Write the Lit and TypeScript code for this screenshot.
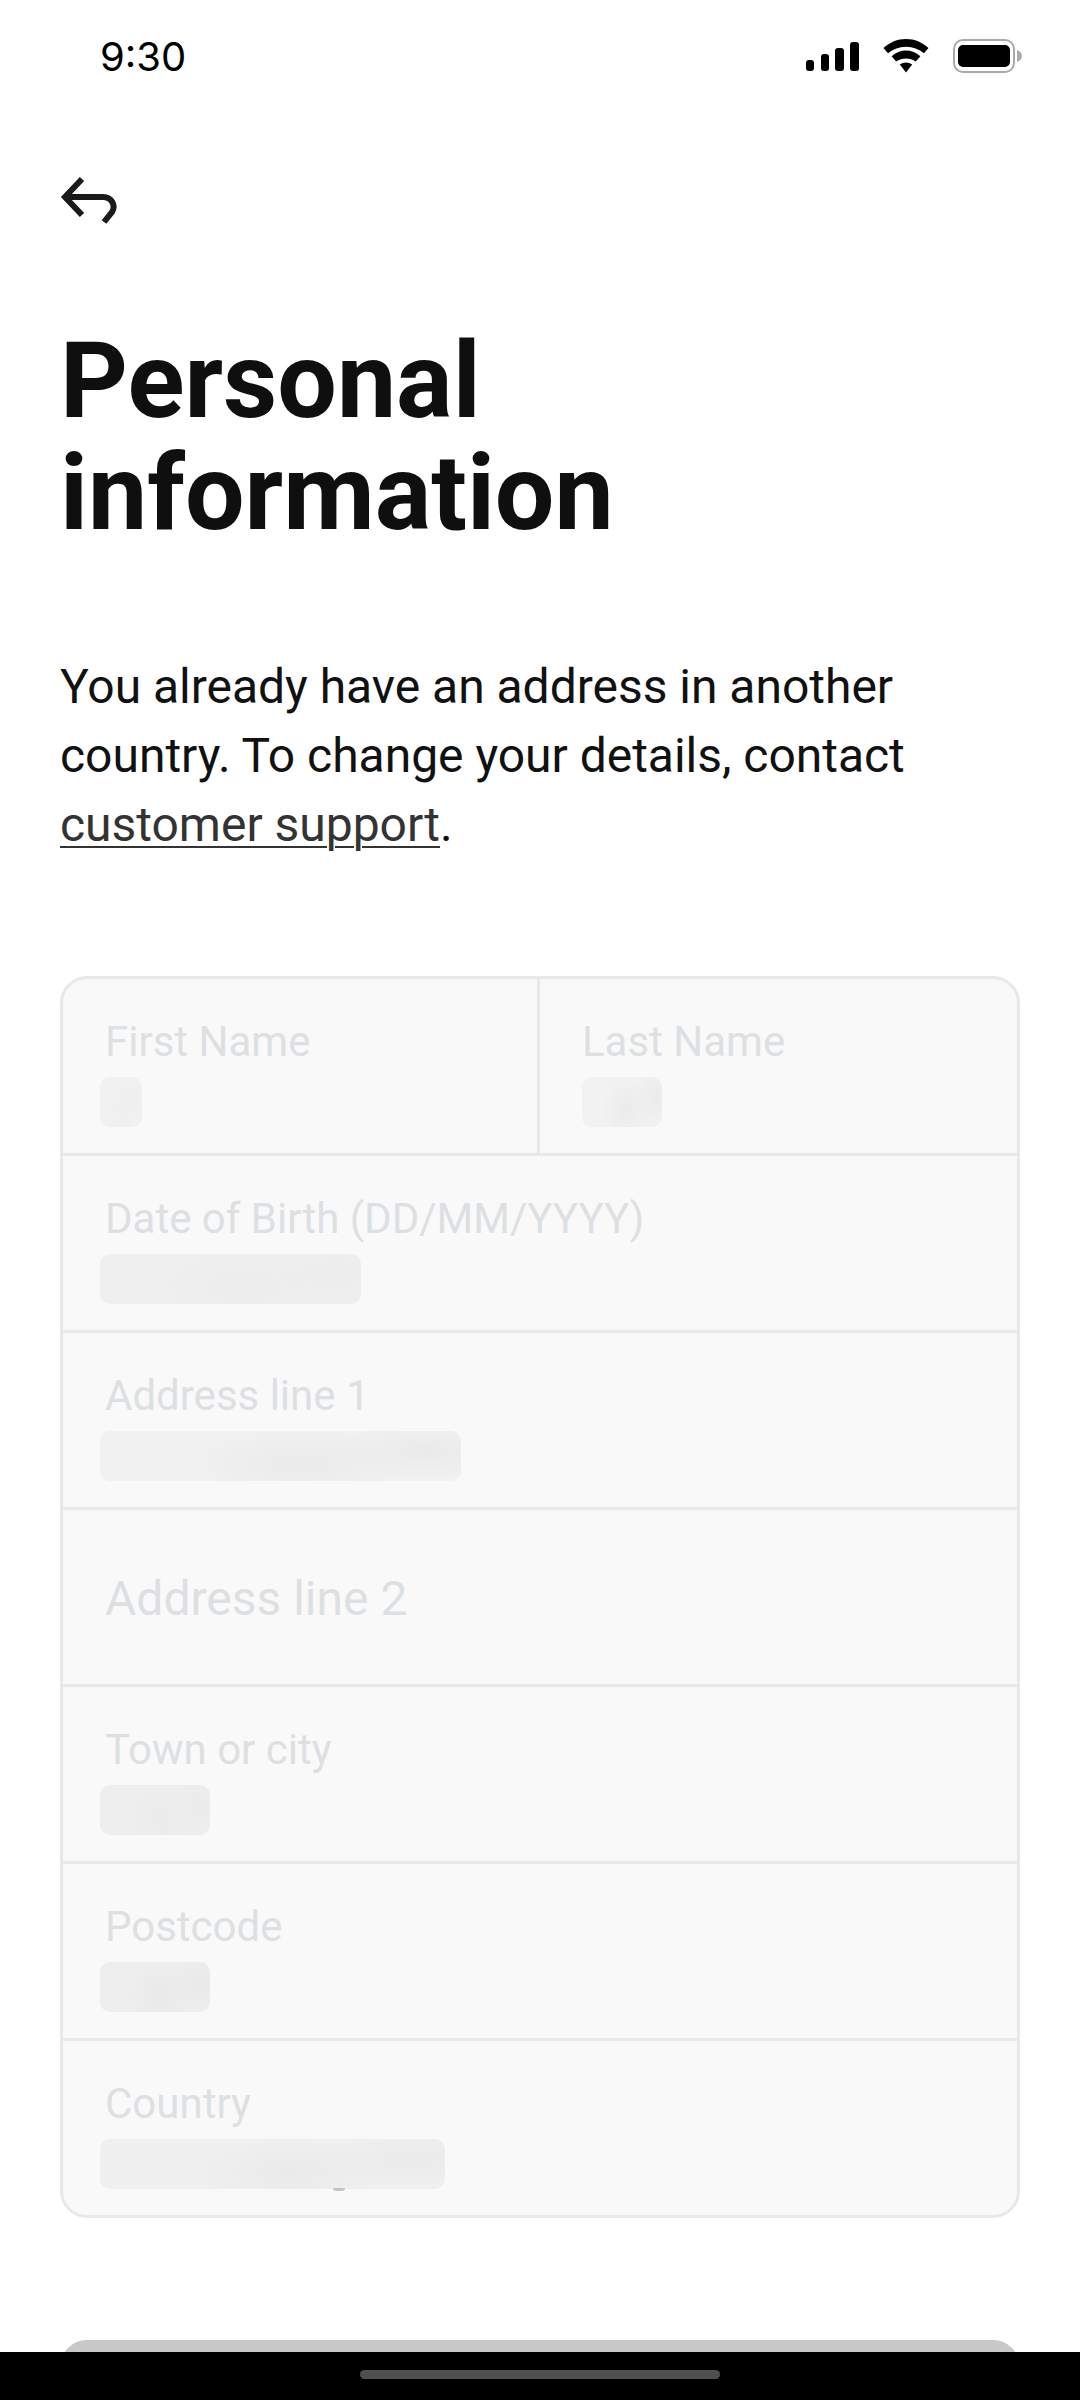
import { LitElement, html, css, svg } from "lit";
import { customElement } from "lit/decorators.js";

type Field = { label: string; w?: number; shade?: string; big?: boolean };

const rows: Field[][] = [
  [
    { label: "First Name", w: 42, shade: "#f1f1f1,#efefef" },
    { label: "Last Name", w: 80, shade: "#f2f2f2,#ebebeb" },
  ],
  [{ label: "Date of Birth (DD/MM/YYYY)", w: 261, shade: "#efefef,#ececec" }],
  [{ label: "Address line 1", w: 361, shade: "#f1f1f1,#eaeaea" }],
  [{ label: "Address line 2", big: true }],
  [{ label: "Town or city", w: 110, shade: "#eeeeee,#ebebeb" }],
  [{ label: "Postcode", w: 110, shade: "#eeeeee,#e9e9e9" }],
  [{ label: "Country", w: 345, shade: "#f0f0f0,#eaeaea" }],
];

@customElement("app-root")
export class AppRoot extends LitElement {
  static styles = css`
    :host {
      display: block;
      position: relative;
      width: 1080px;
      height: 2400px;
      overflow: hidden;
      background: #fff;
      font-family: Roboto, "Noto Sans", sans-serif;
      color: #111;
    }
    .status {
      display: flex;
      align-items: center;
      justify-content: space-between;
      height: 112px;
      padding: 0 58px 0 100px;
      box-sizing: border-box;
    }
    .time {
      font-family: Inter, "Liberation Sans", sans-serif;
      font-size: 40px;
      font-weight: 400;
      color: #000;
    }
    .status-icons {
      display: flex;
      align-items: center;
      gap: 24px;
    }
    .status-icons svg {
      display: block;
    }
    main {
      padding: 63px 60px 0;
    }
    .back {
      display: block;
    }
    h1 {
      margin: 100px 0 0;
      font-size: 105.6px;
      line-height: 112px;
      font-weight: 700;
      letter-spacing: 0;
      color: #0f0f0f;
    }
    .intro {
      margin: 103px 0 0;
      font-size: 48px;
      line-height: 69px;
      letter-spacing: -0.02px;
      color: #111;
    }
    .intro a {
      color: #333;
      text-decoration: underline;
      text-decoration-thickness: 2px;
      text-underline-offset: 5px;
    }
    .form {
      margin-top: 117px;
      border: 3px solid #e8e8e8;
      border-radius: 27px;
      background: #f9f9f9;
      overflow: hidden;
    }
    .row {
      display: flex;
      height: 174px;
      border-bottom: 3px solid #e8e8e8;
    }
    .row:last-child {
      border-bottom: 0;
    }
    .cell {
      position: relative;
      flex: 1 1 0;
      min-width: 0;
      padding: 40px 0 0 42px;
      box-sizing: border-box;
    }
    .cell:not(:last-child) {
      flex: 0 0 474px;
    }
    .cell + .cell {
      border-left: 3px solid #e8e8e8;
      padding-left: 42px;
    }
    .cell.big {
      display: flex;
      align-items: center;
      padding-top: 3px;
    }
    .label {
      font-size: 42px;
      line-height: 46px;
      color: #dde0e3;
    }
    .big .label {
      font-size: 48px;
    }
    .blur {
      position: relative;
      margin: 11.5px 0 0 -5px;
      height: 50px;
      border-radius: 10px;
    }
    .cell + .cell .blur {
      margin-left: 0;
    }
    .tail {
      position: absolute;
      left: 233px;
      bottom: -2px;
      width: 12px;
      height: 3px;
      border-radius: 0 0 6px 6px;
      background: #c4c4c4;
    }
    .submit {
      margin-top: 122px;
      height: 120px;
      border-radius: 27px;
      background: #c8c8c8;
    }
    .nav-bar {
      position: absolute;
      left: 0;
      right: 0;
      bottom: 0;
      height: 48px;
      display: flex;
      justify-content: center;
      align-items: flex-start;
      background: #000;
    }
    .handle {
      margin-top: 18px;
      width: 360px;
      height: 9px;
      border-radius: 5px;
      background: #4f4f4f;
    }
  `;

  private statusIcons() {
    return html`<div class="status-icons">
      <svg width="53" height="29" viewBox="0 0 53 29" fill="#000">
        <rect x="0" y="18" width="8" height="11" rx="3"></rect>
        <rect x="15" y="12" width="8" height="17" rx="3"></rect>
        <rect x="29" y="6" width="9" height="23" rx="3"></rect>
        <rect x="44" y="0" width="9" height="29" rx="3"></rect>
      </svg>
      <svg width="46" height="34" viewBox="0 0 46 34" fill="#000">
        <path d="M23 0C14.5 0 6.6 3.3 0.5 9L5 14.2C10 10 16.2 7.8 23 7.8S36 10 41 14.2L45.5 9C39.4 3.3 31.5 0 23 0Z"></path>
        <path d="M23 11.5C17.8 11.5 12.8 13.5 8.6 17.3L13.2 22.6C16 20.6 19.5 19.5 23 19.5S30 20.6 32.8 22.6L37.4 17.3C33.2 13.5 28.2 11.5 23 11.5Z"></path>
        <path d="M23 23.5C20.8 23.5 18.6 24.2 16.8 25.6L23 33.5L29.2 25.6C27.4 24.2 25.2 23.5 23 23.5Z"></path>
      </svg>
      <svg width="69" height="34" viewBox="0 0 69 34">
        <rect x="1" y="1" width="60" height="32" rx="9" fill="none" stroke="#a9a9a9" stroke-width="2"></rect>
        <rect x="5" y="6" width="52" height="22" rx="5" fill="#000"></rect>
        <path d="M64 11C67 12 69 14.5 69 17S67 22 64 23Z" fill="#a9a9a9"></path>
      </svg>
    </div>`;
  }

  private field(f: Field) {
    const [a, b] = f.shade ? f.shade.split(",") : ["", ""];
    const bg = `radial-gradient(ellipse 30% 70% at 55% 65%, ${b}, transparent), radial-gradient(ellipse 25% 60% at 90% 40%, ${b}, transparent), ${a}`;
    return html`<div class="cell ${f.big ? "big" : ""}">
      <div class="label">${f.label}</div>
      ${f.w
        ? html`<div class="blur" style="width:${f.w}px;background:${bg}">
            ${f.label === "Country" ? html`<div class="tail"></div>` : ""}
          </div>`
        : ""}
    </div>`;
  }

  render() {
    return html`
      <div class="status">
        <span class="time">9:30</span>
        ${this.statusIcons()}
      </div>
      <main>
        <svg class="back" width="60" height="50" viewBox="60 175 60 50" fill="none" stroke="#1a1a1a" stroke-width="6">
          ${svg`<path d="M82 179L65 197L82 215M65 197H103C112 197 116 206 112 212L104 222"></path>`}
        </svg>
        <h1>Personal<br />information</h1>
        <p class="intro">
          You already have an address in another country. To change your details, contact
          <a>customer support</a>.
        </p>
        <div class="form">
          ${rows.map((r) => html`<div class="row">${r.map((f) => this.field(f))}</div>`)}
        </div>
        <div class="submit"></div>
      </main>
      <div class="nav-bar"><div class="handle"></div></div>
    `;
  }
}
